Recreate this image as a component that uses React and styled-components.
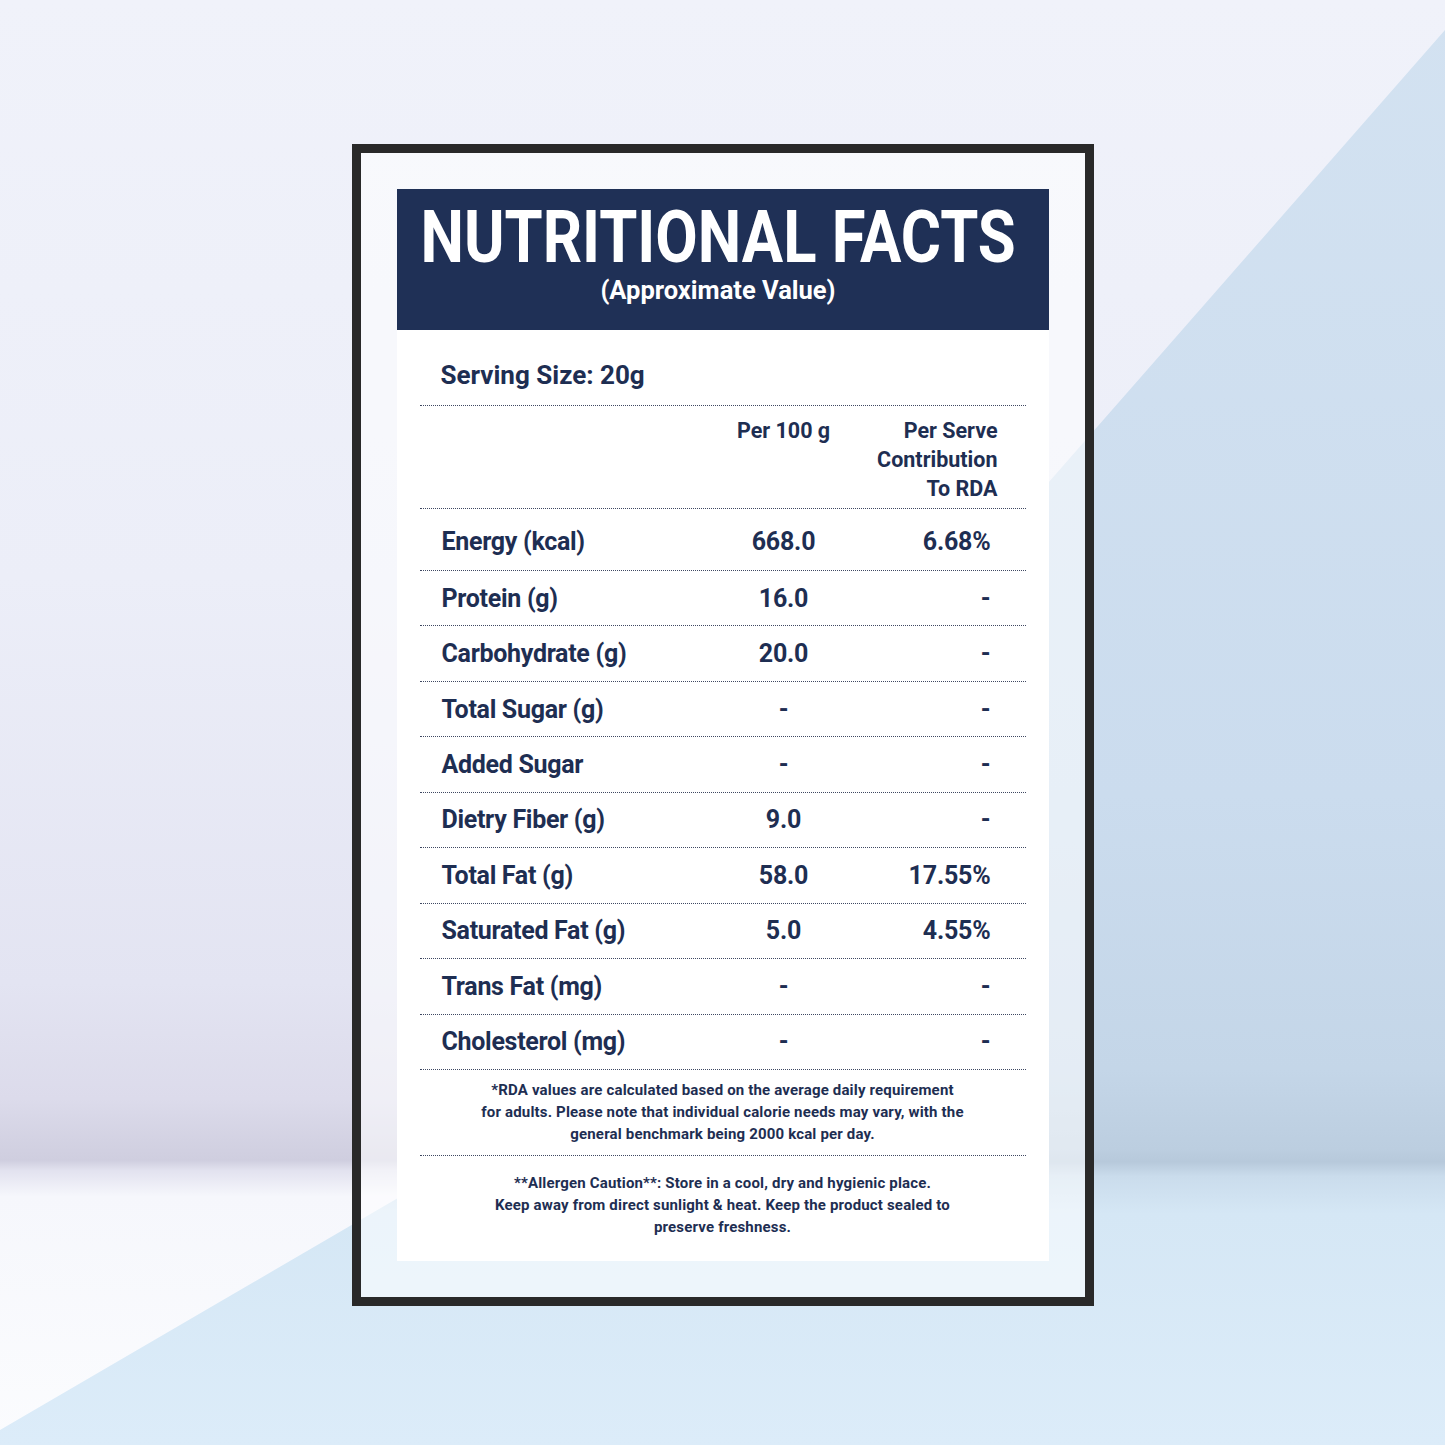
import React from 'react'
import styled, { createGlobalStyle } from 'styled-components'

const GlobalStyle = createGlobalStyle`
  html, body { margin: 0; padding: 0; }
  body {
    font-family: Roboto, "Liberation Sans", sans-serif;
    color: #1e2e52;
  }
`

const Page = styled.main`
  position: relative;
  width: 1445px;
  height: 1445px;
  overflow: hidden;
  display: flex;
  justify-content: center;
  align-items: flex-start;
  padding-top: 144px;
  box-sizing: border-box;
  background: linear-gradient(180deg,
    #f0f2fa 0%, #eceef8 40%, #e3e4f2 68%, #dcdbeb 76%,
    #cfcedf 80.3%, #e2e2ef 81%, #f6f7fc 82.8%, #fbfcfe 100%);

  &::before {
    content: '';
    position: absolute;
    inset: 0;
    clip-path: polygon(1445px 30px, 446px 1170px, 0 1430px, 0 1445px, 1445px 1445px);
    background: linear-gradient(180deg,
      #d3e2f1 0%, #cbdcee 55%, #c4d6e8 74%, #bccee0 79.5%,
      #b7c9db 80.4%, #cadcec 81.4%, #d5e7f5 84%, #dcecf9 100%);
  }
`

const Frame = styled.section`
  position: relative;
  z-index: 1;
  width: 742px;
  box-sizing: border-box;
  border: 9px solid #292929;
  padding: 36px;
  background: rgba(255, 255, 255, 0.55);
`

const Card = styled.div`
  background: #ffffff;
  display: flex;
  flex-direction: column;
`

const Banner = styled.header`
  height: 141px;
  background: #1f3056;
  color: #ffffff;
  display: flex;
  flex-direction: column;
  align-items: center;
  padding: 18px 9px 0 0;
  box-sizing: border-box;
  overflow: hidden;
`

const Title = styled.h1`
  margin: 0;
  font-size: 72px;
  line-height: 62px;
  font-weight: 700;
  white-space: nowrap;
  transform: scaleX(0.855);
  transform-origin: center;
`

const Subtitle = styled.div`
  margin-top: 6px;
  font-size: 25.5px;
  line-height: 30px;
  font-weight: 700;
`

const Body = styled.div`
  padding: 0 23px;
  display: flex;
  flex-direction: column;
`

const Dotted = `border-bottom: 1px dotted #3f4862;`

const Serving = styled.div`
  ${Dotted}
  height: 76px;
  box-sizing: border-box;
  padding: 14px 0 0 21px;
  display: flex;
  align-items: center;
  font-size: 26px;
  font-weight: 700;
`

const Grid = styled.div`
  ${Dotted}
  display: grid;
  grid-template-columns: 1fr 150px 167px;
  align-items: center;
  box-sizing: border-box;
  height: ${p => p.$h}px;
  padding-top: ${p => p.$top || 0}px;
`

const HeadCell = styled.div`
  align-self: start;
  font-size: 21.5px;
  line-height: 29px;
  font-weight: 700;
  text-align: ${p => p.$align};
  padding-right: ${p => p.$pr || 0}px;
`

const Label = styled.div`
  padding-left: 22px;
  font-size: 25px;
  font-weight: 700;
  letter-spacing: -0.3px;
`

const Value = styled.div`
  font-size: 25px;
  font-weight: 700;
  letter-spacing: -0.2px;
  text-align: ${p => p.$align};
  padding-right: ${p => p.$pr || 0}px;
`

const Note = styled.p`
  margin: 0;
  ${p => p.$divided && Dotted}
  padding: ${p => p.$pad};
  text-align: center;
  white-space: nowrap;
  font-size: 15px;
  line-height: 22px;
  font-weight: 700;
  letter-spacing: 0.17px;
`

const rows = [
  ['Energy (kcal)', '668.0', '6.68%'],
  ['Protein (g)', '16.0', '-'],
  ['Carbohydrate (g)', '20.0', '-'],
  ['Total Sugar (g)', '-', '-'],
  ['Added Sugar', '-', '-'],
  ['Dietry Fiber (g)', '9.0', '-'],
  ['Total Fat (g)', '58.0', '17.55%'],
  ['Saturated Fat (g)', '5.0', '4.55%'],
  ['Trans Fat (mg)', '-', '-'],
  ['Cholesterol (mg)', '-', '-'],
]

export default function App() {
  return (
    <Page>
      <GlobalStyle />
      <Frame>
        <Card>
          <Banner>
            <Title>NUTRITIONAL FACTS</Title>
            <Subtitle>(Approximate Value)</Subtitle>
          </Banner>
          <Body>
            <Serving>Serving Size: 20g</Serving>
            <Grid $h={103} $top={10}>
              <div />
              <HeadCell $align="center">Per 100 g</HeadCell>
              <HeadCell $align="right" $pr={28}>Per Serve<br />Contribution<br />To RDA</HeadCell>
            </Grid>
            {rows.map(([name, per100, rda], i) => (
              <Grid key={name} $h={i === 0 ? 62 : 55.45} $top={i === 0 ? 4 : 0}>
                <Label>{name}</Label>
                <Value $align="center">{per100}</Value>
                <Value $align="right" $pr={35}>{rda}</Value>
              </Grid>
            ))}
            <Note $divided $pad="9px 0 10px">
              *RDA values are calculated based on the average daily requirement<br />
              for adults. Please note that individual calorie needs may vary, with the<br />
              general benchmark being 2000 kcal per day.
            </Note>
            <Note $pad="16px 0 23px">
              **Allergen Caution**: Store in a cool, dry and hygienic place.<br />
              Keep away from direct sunlight &amp; heat. Keep the product sealed to<br />
              preserve freshness.
            </Note>
          </Body>
        </Card>
      </Frame>
    </Page>
  )
}
